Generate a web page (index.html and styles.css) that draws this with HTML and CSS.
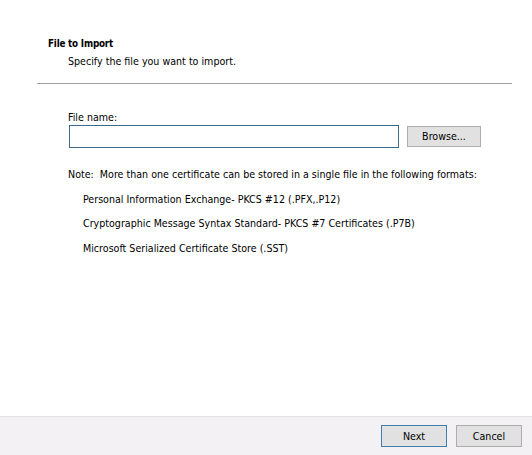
FILE: index.html
```html
<!DOCTYPE html>
<html>
<head>
<meta charset="utf-8">
<title>Certificate Import Wizard</title>
<link rel="stylesheet" href="styles.css">
</head>
<body>
<div class="wizard">
  <div class="main">
    <div class="heading">File to Import</div>
    <div class="subheading">Specify the file you want to import.</div>
    <div class="separator"></div>
    <div class="field-label">File name:</div>
    <div class="file-row">
      <div class="textbox"></div>
      <div class="btn browse">Browse...</div>
    </div>
    <div class="note">Note:  More than one certificate can be stored in a single file in the following formats:</div>
    <ul class="formats">
      <li>Personal Information Exchange- PKCS #12 (.PFX,.P12)</li>
      <li>Cryptographic Message Syntax Standard- PKCS #7 Certificates (.P7B)</li>
      <li>Microsoft Serialized Certificate Store (.SST)</li>
    </ul>
  </div>
  <div class="footer">
    <div class="btn next">Next</div>
    <div class="btn cancel">Cancel</div>
  </div>
</div>
</body>
</html>
```
FILE: styles.css
```css
html, body {
  margin: 0;
  padding: 0;
  background: #ffffff;
}
body {
  font-family: "DejaVu Sans Condensed", "DejaVu Sans", sans-serif;
  font-size: 10.6px;
  line-height: 13px;
  color: #000000;
}
.wizard {
  width: 532px;
  height: 455px;
  display: flex;
  flex-direction: column;
}
.main {
  flex: 1;
  padding-top: 37px;
}
.heading {
  margin-left: 48px;
  font-weight: bold;
  font-size: 9.8px;
  letter-spacing: -0.2px;
}
.subheading {
  margin-left: 68px;
  margin-top: 5px;
}
.separator {
  margin: 15px 20px 0 37px;
  height: 1px;
  background: #a0a0a0;
}
.field-label {
  margin: 27px 0 1px 68px;
}
.file-row {
  display: flex;
  align-items: center;
  margin-left: 69px;
  gap: 8px;
}
.textbox {
  width: 328px;
  height: 21px;
  border: 1px solid #3f6c8c;
  background: #ffffff;
}
.btn {
  box-sizing: border-box;
  display: flex;
  align-items: center;
  justify-content: center;
  background: #e1e1e1;
  border: 1px solid #adadad;
  white-space: nowrap;
}
.browse {
  width: 74px;
  height: 21px;
}
.note {
  margin: 20px 0 0 68px;
  white-space: pre;
}
.formats {
  list-style: none;
  margin: 0 0 0 83px;
  padding: 0;
}
.formats li {
  margin-top: 11.5px;
}
.footer {
  border-top: 1px solid #e3e0e3;
  background: #f3f1f3;
  display: flex;
  justify-content: flex-end;
  align-items: flex-start;
  gap: 9px;
  padding: 8px 10px 0 0;
  box-sizing: border-box;
  height: 39px;
}
.next, .cancel {
  width: 66px;
  height: 22px;
}
.next {
  border-color: #3c7fb1;
}
```
